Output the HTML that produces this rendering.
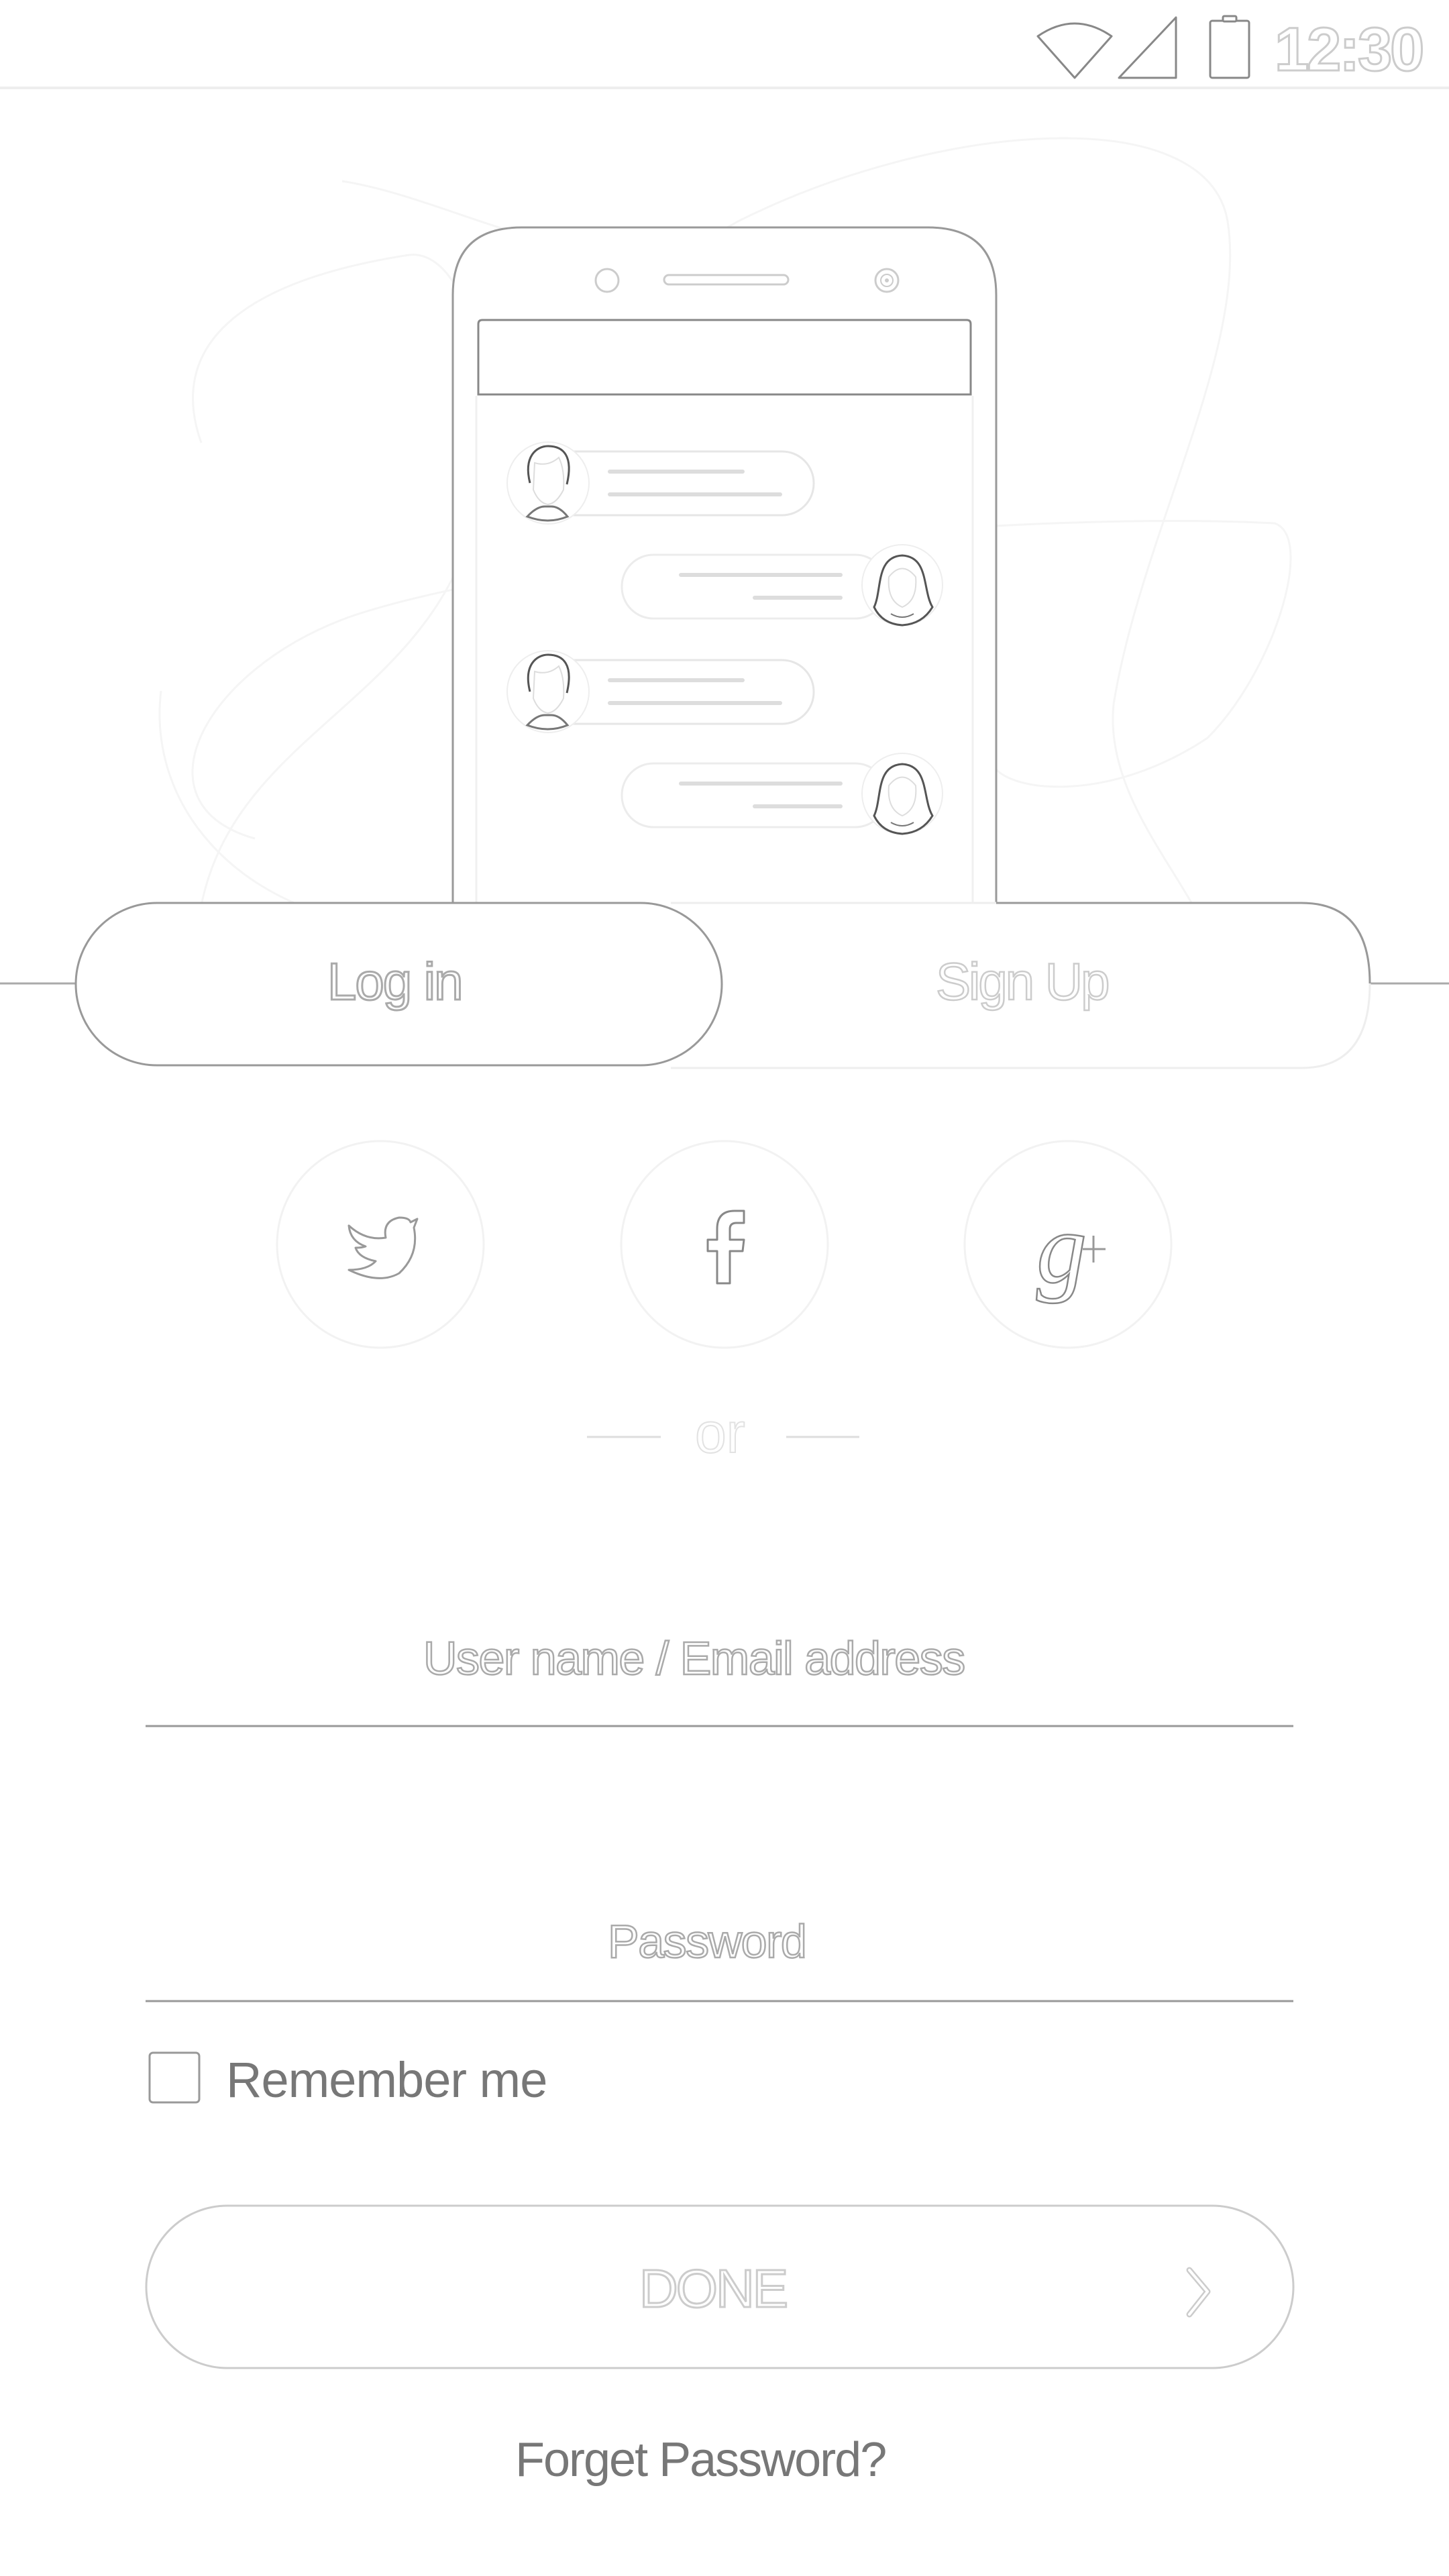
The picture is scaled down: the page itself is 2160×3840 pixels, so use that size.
<!DOCTYPE html>
<html><head><meta charset="utf-8">
<style>
html,body{margin:0;padding:0;background:#fff;}
body{width:2160px;height:3840px;position:relative;overflow:hidden;font-family:"Liberation Sans",sans-serif;}
.t{position:absolute;white-space:nowrap;}
.outline{color:#fff;-webkit-text-stroke:2.5px #b8b8b8;}
</style></head><body>

<svg width="2160" height="3840" style="position:absolute;left:0;top:0" xmlns="http://www.w3.org/2000/svg">
  <line x1="0" y1="131" x2="2160" y2="131" stroke="#eee" stroke-width="4"/>
  <path d="M1547 54 Q1602 16 1657 54 L1602 116 Z" fill="#fff" stroke="#888" stroke-width="3" stroke-linejoin="round"/>
  <path d="M1668 116 L1753 26 L1753 116 Z" fill="#fff" stroke="#888" stroke-width="3" stroke-linejoin="round"/>
  <rect x="1804" y="31" width="58" height="85" rx="3" fill="#fff" stroke="#888" stroke-width="3"/>
  <rect x="1823" y="24" width="20" height="8" rx="2" fill="#fff" stroke="#888" stroke-width="3"/>

  <g fill="none" stroke="#f5f5f5" stroke-width="3">
    <path d="M510 270 C700 300 900 450 1100 330 C1400 180 1800 150 1830 330 C1860 520 1700 800 1660 1050 C1640 1250 1900 1400 1800 1550"/>
    <path d="M300 660 C250 520 350 420 610 380 C700 370 760 600 700 800 C620 1050 350 1100 300 1350"/>
    <path d="M380 1250 C200 1200 300 1000 520 920 C780 830 1500 760 1900 780 C1960 800 1900 1000 1800 1100 C1650 1200 1500 1180 1480 1140"/>
    <path d="M240 1030 C220 1200 350 1350 560 1380"/>
  </g>

  <path d="M675 1346 L675 440 Q675 339 778 339 L1383 339 Q1485 339 1485 440 L1485 1346" fill="#fff" stroke="#999" stroke-width="3"/>
  <circle cx="905" cy="418" r="17" fill="#fff" stroke="#ccc" stroke-width="3"/>
  <rect x="990" y="410" width="185" height="14" rx="7" fill="#fff" stroke="#ccc" stroke-width="3"/>
  <circle cx="1322" cy="418" r="17" fill="#fff" stroke="#ccc" stroke-width="3"/>
  <circle cx="1322" cy="418" r="9" fill="none" stroke="#ccc" stroke-width="2"/>
  <circle cx="1322" cy="418" r="3" fill="#ccc"/>
  <path d="M713 588 L713 483 Q713 477 719 477 L1441 477 Q1447 477 1447 483 L1447 588 Z" fill="#fff" stroke="#888" stroke-width="3"/>
  <line x1="710" y1="590" x2="710" y2="1346" stroke="#f0f0f0" stroke-width="3"/>
  <line x1="1450" y1="590" x2="1450" y2="1346" stroke="#f0f0f0" stroke-width="3"/>

  <g id="b1">
    <rect x="790" y="673" width="423" height="95" rx="47" fill="#fff" stroke="#e6e6e6" stroke-width="3"/>
    <line x1="909" y1="703" x2="1107" y2="703" stroke="#ddd" stroke-width="6" stroke-linecap="round"/>
    <line x1="909" y1="737" x2="1163" y2="737" stroke="#ddd" stroke-width="6" stroke-linecap="round"/>
    <circle cx="817" cy="720" r="61" fill="#fff" stroke="#eee" stroke-width="2"/>
    <path d="M790 720 C780 680 800 665 817 665 C840 665 855 680 845 722" fill="none" stroke="#555" stroke-width="3"/>
    <path d="M797 690 Q817 696 833 682 Q842 700 840 730 Q830 750 817 752 Q803 750 795 730 Z" fill="none" stroke="#ddd" stroke-width="2"/>
    <path d="M786 770 Q800 755 812 755 L822 755 Q834 755 846 770 Q817 782 786 770 Z" fill="#fff" stroke="#777" stroke-width="3"/>
  </g>
  <use href="#b1" y="311"/>
  <g id="b2">
    <rect x="927" y="827" width="395" height="95" rx="47" fill="#fff" stroke="#ececec" stroke-width="3"/>
    <line x1="1015" y1="857" x2="1253" y2="857" stroke="#ddd" stroke-width="6" stroke-linecap="round"/>
    <line x1="1125" y1="891" x2="1253" y2="891" stroke="#ddd" stroke-width="6" stroke-linecap="round"/>
    <circle cx="1345" cy="872" r="60" fill="#fff" stroke="#eee" stroke-width="2"/>
    <path d="M1303 905 C1315 880 1305 830 1345 828 C1385 830 1375 880 1390 905 Q1375 930 1345 932 Q1315 930 1303 905 Z" fill="#fff" stroke="#555" stroke-width="3"/>
    <path d="M1325 860 Q1345 835 1365 860 Q1368 895 1345 905 Q1322 895 1325 860 Z" fill="#fff" stroke="#ddd" stroke-width="2"/>
    <path d="M1328 915 Q1345 925 1362 915" fill="none" stroke="#777" stroke-width="2"/>
  </g>
  <use href="#b2" y="311"/>

  <line x1="0" y1="1466" x2="113" y2="1466" stroke="#aaa" stroke-width="3"/>
  <line x1="2042" y1="1466" x2="2160" y2="1466" stroke="#aaa" stroke-width="3"/>
  <path d="M1000 1346 L1940 1346 Q2042 1346 2042 1466 Q2042 1592 1940 1592 L1000 1592" fill="#fff" stroke="#eee" stroke-width="3"/>
  <path d="M1485 1346 L1940 1346 Q2042 1346 2042 1466" fill="none" stroke="#999" stroke-width="3"/>
  <rect x="113" y="1346" width="963" height="242" rx="121" fill="#fff" stroke="#999" stroke-width="3"/>

  <g fill="#fff" stroke="#f2f2f2" stroke-width="3">
    <circle cx="567" cy="1855" r="154"/>
    <circle cx="1080" cy="1855" r="154"/>
    <circle cx="1592" cy="1855" r="154"/>
  </g>
  <path d="M520 1827 Q545 1850 575 1845 Q570 1820 595 1815 Q610 1815 612 1822 L622 1817 L617 1830 Q625 1870 595 1898 Q565 1915 520 1893 Q548 1893 560 1880 Q535 1875 530 1860 Q540 1860 545 1858 Q522 1850 520 1827 Z" fill="#fff" stroke="#999" stroke-width="3" stroke-linejoin="round"/>
  <path d="M1069 1913 L1069 1865 L1055 1865 L1055 1848 L1069 1848 L1069 1832 Q1069 1805 1095 1805 L1109 1805 L1109 1823 L1098 1823 Q1088 1823 1088 1832 L1088 1848 L1109 1848 L1107 1865 L1088 1865 L1088 1913 Z" fill="#fff" stroke="#888" stroke-width="3" stroke-linejoin="round"/>
  <path d="M1630 1842 L1630 1882 M1614 1862 L1648 1862" stroke="#999" stroke-width="3"/>

  <line x1="875" y1="2142" x2="985" y2="2142" stroke="#ddd" stroke-width="3"/>
  <line x1="1172" y1="2142" x2="1281" y2="2142" stroke="#ddd" stroke-width="3"/>

  <line x1="217" y1="2573" x2="1928" y2="2573" stroke="#999" stroke-width="3"/>
  <line x1="217" y1="2983" x2="1928" y2="2983" stroke="#999" stroke-width="3"/>
  <rect x="223" y="3060" width="74" height="74" rx="5" fill="#fff" stroke="#999" stroke-width="3"/>

  <rect x="218" y="3288" width="1710" height="242" rx="121" fill="#fff" stroke="#ccc" stroke-width="3"/>
  <path d="M1773 3384 L1800 3416 L1773 3450" fill="none" stroke="#ccc" stroke-width="9" stroke-linecap="round" stroke-linejoin="round"/>
  <path d="M1773 3384 L1800 3416 L1773 3450" fill="none" stroke="#fff" stroke-width="4" stroke-linecap="round" stroke-linejoin="round"/>
</svg>

<div class="t" style="left:1545px;top:1775px;font-size:150px;font-family:'Liberation Serif',serif;font-style:italic;color:#fff;-webkit-text-stroke:2.5px #888;">g</div>

<div class="t outline" style="left:1900px;top:22px;font-size:92px;font-weight:bold;letter-spacing:-3px;-webkit-text-stroke:3px #ccc;">12:30</div>

<div class="t outline" style="left:488px;top:1418px;font-size:78px;letter-spacing:-2px;-webkit-text-stroke:3px #aaa;">Log in</div>
<div class="t outline" style="left:1395px;top:1418px;font-size:78px;letter-spacing:-3px;-webkit-text-stroke:2.5px #ccc;">Sign Up</div>

<div class="t" style="left:1036px;top:2088px;font-size:84px;color:#fff;-webkit-text-stroke:2px #e2e2e2;">or</div>

<div class="t outline" style="left:631px;top:2432px;font-size:70px;letter-spacing:-1.5px;-webkit-text-stroke:2.5px #aaa;">User name / Email address</div>
<div class="t outline" style="left:906px;top:2854px;font-size:70px;letter-spacing:-1.5px;-webkit-text-stroke:2.5px #aaa;">Password</div>

<div class="t" style="left:337px;top:3058px;font-size:74px;letter-spacing:-1px;color:#777;">Remember me</div>

<div class="t outline" style="left:953px;top:3366px;font-size:80px;letter-spacing:-3px;-webkit-text-stroke:3px #ccc;">DONE</div>

<div class="t" style="left:768px;top:3626px;font-size:72px;letter-spacing:-2px;color:#777;">Forget Password?</div>

</body></html>
